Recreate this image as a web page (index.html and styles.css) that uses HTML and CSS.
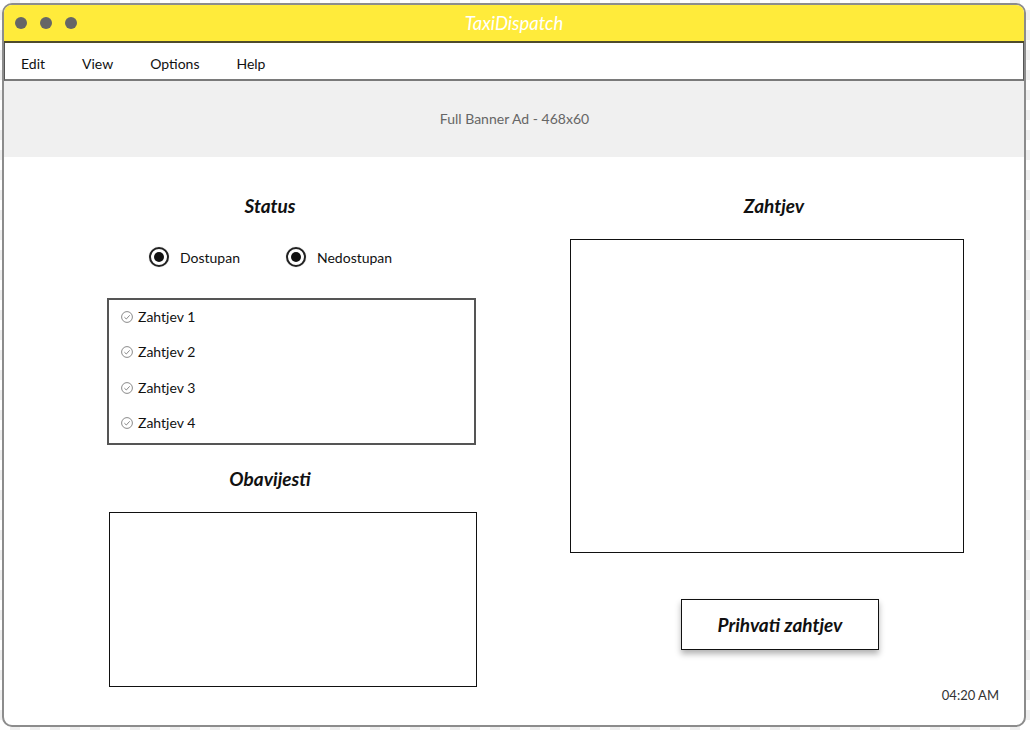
FILE: index.html
```
<!DOCTYPE html>
<html>
<head>
<meta charset="utf-8">
<link rel="stylesheet" href="styles.css">
</head>
<body>
<div class="window">
  <div class="titlebar">
    <div class="dots"><span class="dot"></span><span class="dot"></span><span class="dot"></span></div>
    <div class="title">TaxiDispatch</div>
  </div>
  <div class="menubar">
    <span class="menu-item">Edit</span>
    <span class="menu-item">View</span>
    <span class="menu-item">Options</span>
    <span class="menu-item">Help</span>
  </div>
  <div class="banner">Full Banner Ad - 468x60</div>
  <div class="content">
    <div class="col-left">
      <div class="heading h-status">Status</div>
      <div class="radios">
        <div class="radio-opt first"><span class="radio"></span><span class="radio-label">Dostupan</span></div>
        <div class="radio-opt"><span class="radio"></span><span class="radio-label">Nedostupan</span></div>
      </div>
      <div class="listbox">
        <div class="list-item"><svg class="check" viewBox="0 0 12 12"><circle cx="6" cy="6" r="5.4" fill="none" stroke="#8a8a8a" stroke-width="1"/><path d="M3.4 6.2 L5.3 8 L8.7 4.3" fill="none" stroke="#8a8a8a" stroke-width="1"/></svg><span>Zahtjev 1</span></div>
        <div class="list-item"><svg class="check" viewBox="0 0 12 12"><circle cx="6" cy="6" r="5.4" fill="none" stroke="#8a8a8a" stroke-width="1"/><path d="M3.4 6.2 L5.3 8 L8.7 4.3" fill="none" stroke="#8a8a8a" stroke-width="1"/></svg><span>Zahtjev 2</span></div>
        <div class="list-item"><svg class="check" viewBox="0 0 12 12"><circle cx="6" cy="6" r="5.4" fill="none" stroke="#8a8a8a" stroke-width="1"/><path d="M3.4 6.2 L5.3 8 L8.7 4.3" fill="none" stroke="#8a8a8a" stroke-width="1"/></svg><span>Zahtjev 3</span></div>
        <div class="list-item"><svg class="check" viewBox="0 0 12 12"><circle cx="6" cy="6" r="5.4" fill="none" stroke="#8a8a8a" stroke-width="1"/><path d="M3.4 6.2 L5.3 8 L8.7 4.3" fill="none" stroke="#8a8a8a" stroke-width="1"/></svg><span>Zahtjev 4</span></div>
      </div>
      <div class="heading h-obav">Obavijesti</div>
      <div class="box box-obav"></div>
    </div>
    <div class="col-right">
      <div class="heading h-zahtjev">Zahtjev</div>
      <div class="box box-zahtjev"></div>
      <div class="button">Prihvati zahtjev</div>
      <div class="time">04:20 AM</div>
    </div>
  </div>
</div>
</body>
</html>
```
FILE: styles.css
```
* { box-sizing: border-box; }
html, body { margin: 0; padding: 0; }
body {
  width: 1030px;
  height: 730px;
  overflow: hidden;
  font-family: "Lato", "Liberation Sans", sans-serif;
  color: #111;
  background-color: #ffffff;
  background-image: repeating-conic-gradient(#efefef 0 25%, #ffffff 0 50%);
  background-size: 20px 20px;
  padding-top: 3px;
  padding-left: 2px;
}
.window {
  width: 1024px;
  height: 724px;
  border: 2px solid #8c8c8c;
  border-radius: 10px;
  overflow: hidden;
  background: #fff;
  display: flex;
  flex-direction: column;
}
.titlebar {
  height: 38px;
  flex: none;
  background: #ffeb3b;
  border-bottom: 2px solid #4f4b2c;
  display: flex;
  align-items: center;
  position: relative;
}
.dots {
  display: flex;
  gap: 13px;
  padding-left: 11px;
}
.dot {
  width: 12px;
  height: 12px;
  border-radius: 50%;
  background: #666;
}
.title {
  position: absolute;
  left: 0;
  right: 0;
  top: 0;
  bottom: 0;
  display: flex;
  align-items: center;
  justify-content: center;
  color: #fff;
  font-style: italic;
  font-size: 18.5px;
  padding-bottom: 1px;
}
.menubar {
  height: 38px;
  flex: none;
  border-bottom: 2px solid #7a7a7a;
  border-left: 1px solid #555;
  border-right: 1px solid #555;
  display: flex;
  align-items: center;
  gap: 37px;
  padding-left: 16px;
  font-size: 14px;
  padding-top: 5px;
}
.banner {
  height: 76px;
  flex: none;
  background: #f0f0f0;
  color: #666;
  font-size: 14px;
  display: flex;
  align-items: center;
  justify-content: center;
  padding-left: 1px;
  padding-bottom: 1px;
}
.content {
  flex: 1;
  display: flex;
}
.col-left {
  width: 540px;
  flex: none;
  display: flex;
  flex-direction: column;
}
.col-right {
  flex: 1;
  display: flex;
  flex-direction: column;
}
.heading {
  width: 200px;
  text-align: center;
  font-weight: bold;
  font-style: italic;
  font-size: 19px;
  line-height: 22px;
}
.h-status { margin-left: 166px; margin-top: 38px; }
.radios {
  display: flex;
  align-items: center;
  margin-top: 29px;
  margin-left: 145px;
  height: 22px;
}
.radio-opt {
  display: flex;
  align-items: center;
  gap: 11px;
  font-size: 14px;
}
.radio-opt.first { width: 137px; }
.radio {
  width: 20px;
  height: 20px;
  border-radius: 50%;
  border: 2px solid #222;
  display: flex;
  align-items: center;
  justify-content: center;
  box-shadow: 0 0 1px rgba(0,0,0,0.4);
}
.radio::after {
  content: "";
  width: 10px;
  height: 10px;
  border-radius: 50%;
  background: #111;
}
.listbox {
  margin-top: 30px;
  margin-left: 103px;
  width: 369px;
  height: 147px;
  border: 2px solid #555;
  display: flex;
  flex-direction: column;
  gap: 13.6px;
  padding-top: 5px;
  padding-left: 12px;
}
.list-item {
  display: flex;
  align-items: center;
  gap: 5px;
  height: 22px;
  font-size: 14px;
}
.check { width: 12px; height: 12px; flex: none; margin-top: 1px; }
.h-obav { margin-left: 166px; margin-top: 23px; }
.box { border: 1px solid #111; }
.box-obav {
  margin-top: 22px;
  margin-left: 105px;
  width: 368px;
  height: 175px;
}
.h-zahtjev { margin-left: 130px; margin-top: 38px; }
.box-zahtjev {
  margin-top: 22px;
  margin-left: 26px;
  width: 394px;
  height: 314px;
}
.button {
  margin-top: 46px;
  margin-left: 137px;
  width: 198px;
  height: 51px;
  border: 1px solid #111;
  box-shadow: 0 4px 6px rgba(0,0,0,0.3);
  display: flex;
  align-items: center;
  justify-content: center;
  font-weight: bold;
  font-style: italic;
  font-size: 19px;
}
.time {
  margin-top: 36px;
  align-self: flex-end;
  margin-right: 25px;
  font-size: 13px;
  line-height: 18px;
  color: #333;
}
```
